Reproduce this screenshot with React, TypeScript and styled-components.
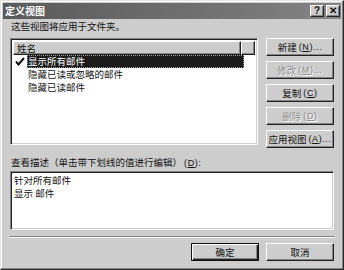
import * as React from 'react';
import styled, { createGlobalStyle, css } from 'styled-components';

const GlobalStyle = createGlobalStyle`
  html, body {
    margin: 0;
    padding: 0;
    background: #cdcdcd;
  }
  body {
    font-family: "Noto Sans CJK SC", "Liberation Sans", sans-serif;
    font-size: 9.5px;
    color: #111;
  }
`;

const raised = css`
  box-sizing: border-box;
  background: #cdcdcd;
  border-top: 1px solid #fff;
  border-left: 1px solid #fff;
  border-right: 1px solid #222;
  border-bottom: 1px solid #222;
  box-shadow: inset -1px -1px 0 #848484;
`;

const sunken = css`
  box-sizing: border-box;
  background: #fff;
  border-top: 1px solid #848484;
  border-left: 1px solid #848484;
  border-right: 1px solid #fff;
  border-bottom: 1px solid #fff;
  box-shadow: inset 1px 1px 0 #222, inset -1px -1px 0 #cdcdcd;
`;

const Window = styled.div`
  width: 344px;
  height: 270px;
  box-sizing: border-box;
  background: #cdcdcd;
  border-top: 1px solid #e6e6e6;
  border-left: 1px solid #e6e6e6;
  border-right: 1px solid #2a2a2a;
  border-bottom: 1px solid #2a2a2a;
  box-shadow: inset -1px -1px 0 #848484, inset 1px 1px 0 #fff;
  padding: 2px;
  display: flex;
  flex-direction: column;
  overflow: hidden;
`;

const TitleBar = styled.div`
  flex: none;
  height: 16px;
  background: linear-gradient(90deg, #5a5a5a, #717171 60%, #858585);
  display: flex;
  align-items: center;
  padding: 0 1px 0 2px;
  color: #fff;
  font-size: 10px;
  line-height: 16px;
`;

const TitleText = styled.span`
  flex: 1;
  font-weight: bold;
`;

const CaptionButton = styled.div<{ $gap?: boolean }>`
  ${raised};
  width: 14px;
  height: 12px;
  color: #111;
  font-family: "Liberation Sans", sans-serif;
  font-weight: bold;
  font-size: 10px;
  line-height: 10px;
  display: flex;
  align-items: center;
  justify-content: center;
  margin-left: ${(p) => (p.$gap ? '2px' : '0')};
`;

const Body = styled.div`
  flex: 1;
  padding: 0 7px;
  display: flex;
  flex-direction: column;
`;

const Label = styled.div<{ $top: number }>`
  flex: none;
  height: 13px;
  line-height: 13px;
  margin-top: ${(p) => p.$top}px;
  padding-left: 1px;
  white-space: nowrap;
`;

const TopRow = styled.div`
  flex: none;
  margin-top: 5px;
  height: 110px;
  display: flex;
  gap: 8px;
`;

const ListBox = styled.div`
  ${sunken};
  width: 250px;
  height: 107px;
  padding: 2px;
  display: flex;
  flex-direction: column;
`;

const HeaderRow = styled.div`
  display: flex;
  height: 14px;
  flex: none;
`;

const HeaderCell = styled.div<{ $w?: number }>`
  ${raised};
  ${(p) => (p.$w ? `width: ${p.$w}px;` : 'flex: 1;')}
  line-height: 12px;
  padding-left: 3px;
`;

const Row = styled.div`
  flex: none;
  display: flex;
  align-items: center;
  height: 13px;
  line-height: 13px;
`;

const CheckSlot = styled.div`
  width: 14px;
  height: 13px;
  display: flex;
  justify-content: center;
  align-items: center;
`;

const RowText = styled.div<{ $selected?: boolean }>`
  box-sizing: border-box;
  height: 13px;
  line-height: 13px;
  padding-left: 1px;
  white-space: nowrap;
  ${(p) =>
    p.$selected &&
    css`
      width: 217px;
      background: #1c1c1c;
      color: #fff;
      outline: 1px dotted #9a9a9a;
      outline-offset: -1px;
    `}
`;

const ButtonColumn = styled.div`
  display: flex;
  flex-direction: column;
  gap: 5px;
`;

const Button = styled.div<{ $disabled?: boolean; $default?: boolean }>`
  ${raised};
  flex: none;
  width: 68px;
  height: 18px;
  display: flex;
  align-items: center;
  justify-content: center;
  line-height: 14px;
  white-space: nowrap;
  ${(p) =>
    p.$default &&
    css`
      border: 1px solid #111;
      box-shadow: inset 1px 1px 0 #fff, inset -1px -1px 0 #222, inset -2px -2px 0 #848484;
    `}
  ${(p) =>
    p.$disabled &&
    css`
      color: #8c8c8c;
      text-shadow: 1px 1px 0 #fff;
    `}
`;

const Accel = styled.span`
  font-family: "Liberation Sans", sans-serif;
  font-size: 9px;
  line-height: 1;
  margin-left: 2px;
  letter-spacing: 0.6px;
`;

const U = styled.span`
  text-decoration: underline;
`;

const DescBox = styled.div`
  ${sunken};
  flex: none;
  margin-top: 2px;
  height: 59px;
  padding: 2px 3px;
`;

const DescLine = styled.div`
  height: 13px;
  line-height: 13px;
  white-space: pre;
`;

const Separator = styled.div`
  flex: none;
  margin-top: 6px;
  height: 0;
  border-top: 1px solid #848484;
  border-bottom: 1px solid #fff;
`;

const Footer = styled.div`
  flex: none;
  margin-top: 5px;
  display: flex;
  justify-content: flex-end;
  gap: 7px;
`;

const Check = () => (
  <svg width="10" height="9" viewBox="0 0 10 9">
    <path d="M1 4.5 L3.5 7.5 L9 1" stroke="#111" strokeWidth="2" fill="none" />
  </svg>
);

const rows = ['显示所有邮件', '隐藏已读或忽略的邮件', '隐藏已读邮件'];

const buttons: { label: string; key: string; tail?: string; disabled?: boolean }[] = [
  { label: '新建', key: 'N', tail: '...' },
  { label: '修改', key: 'M', tail: '...', disabled: true },
  { label: '复制', key: 'C' },
  { label: '删除', key: 'D', disabled: true },
  { label: '应用视图', key: 'A', tail: '...' },
];

export default function App() {
  return (
    <>
      <GlobalStyle />
      <Window>
        <TitleBar>
          <TitleText>定义视图</TitleText>
          <CaptionButton>?</CaptionButton>
          <CaptionButton $gap>✕</CaptionButton>
        </TitleBar>
        <Body>
          <Label $top={1}>这些视图将应用于文件夹。</Label>
          <TopRow>
            <ListBox>
              <HeaderRow>
                <HeaderCell>姓名</HeaderCell>
                <HeaderCell $w={14} />
              </HeaderRow>
              {rows.map((r, i) => (
                <Row key={r}>
                  <CheckSlot>{i === 0 && <Check />}</CheckSlot>
                  <RowText $selected={i === 0}>{r}</RowText>
                </Row>
              ))}
            </ListBox>
            <ButtonColumn>
              {buttons.map((b) => (
                <Button key={b.key} $disabled={b.disabled}>
                  {b.label}
                  <Accel>
                    (<U>{b.key}</U>){b.tail}
                  </Accel>
                </Button>
              ))}
            </ButtonColumn>
          </TopRow>
          <Label $top={8}>
            查看描述（单击带下划线的值进行编辑）
            <Accel>
              (<U>D</U>):
            </Accel>
          </Label>
          <DescBox>
            <DescLine>针对所有邮件</DescLine>
            <DescLine>显示 邮件</DescLine>
          </DescBox>
          <Separator />
          <Footer>
            <Button $default>确定</Button>
            <Button>取消</Button>
          </Footer>
        </Body>
      </Window>
    </>
  );
}
